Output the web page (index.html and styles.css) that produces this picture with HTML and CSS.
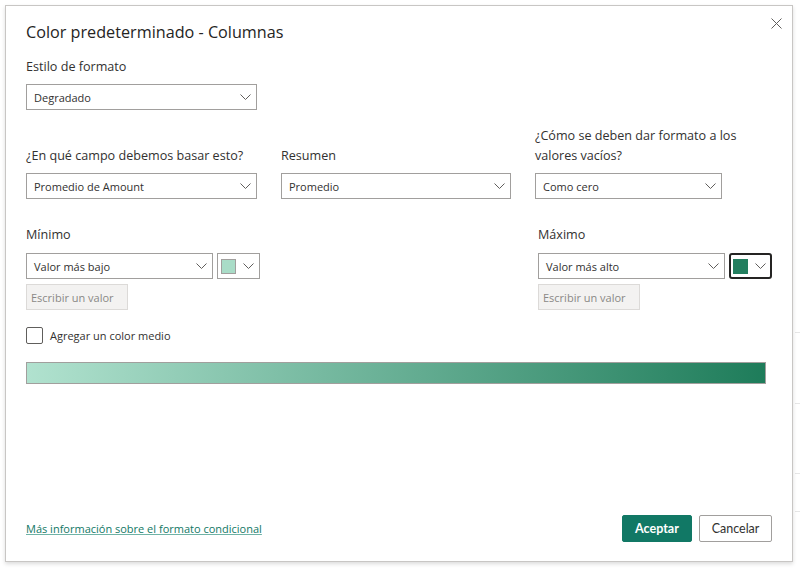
FILE: index.html
```html
<!DOCTYPE html>
<html lang="es">
<head>
<meta charset="utf-8">
<title>Color predeterminado - Columnas</title>
<link rel="stylesheet" href="styles.css">
</head>
<body>
<div class="backdrop">
  <span class="bg-line l1"></span>
  <span class="bg-line l2"></span>
  <span class="bg-line l3"></span>
  <span class="bg-line l4"></span>
</div>
<div class="dialog">
  <button class="close" aria-label="Cerrar">
    <svg width="11" height="11" viewBox="0 0 11 11"><path d="M0.5 0.5 L10.5 10.5 M10.5 0.5 L0.5 10.5" stroke="#605e5c" stroke-width="1" fill="none"/></svg>
  </button>
  <h1 class="title">Color predeterminado - Columnas</h1>

  <div class="field first">
    <div class="label">Estilo de formato</div>
    <div class="select w231"><span>Degradado</span><svg class="chev" width="11" height="6" viewBox="0 0 11 6"><path d="M0.5 0.5 L5.5 5.5 L10.5 0.5" stroke="#605e5c" fill="none"/></svg></div>
  </div>

  <div class="row3">
    <div class="field">
      <div class="label">¿En qué campo debemos basar esto?</div>
      <div class="select"><span>Promedio de Amount</span><svg class="chev" width="11" height="6" viewBox="0 0 11 6"><path d="M0.5 0.5 L5.5 5.5 L10.5 0.5" stroke="#605e5c" fill="none"/></svg></div>
    </div>
    <div class="field">
      <div class="label">Resumen</div>
      <div class="select"><span>Promedio</span><svg class="chev" width="11" height="6" viewBox="0 0 11 6"><path d="M0.5 0.5 L5.5 5.5 L10.5 0.5" stroke="#605e5c" fill="none"/></svg></div>
    </div>
    <div class="field">
      <div class="label">¿Cómo se deben dar formato a los valores vacíos?</div>
      <div class="select"><span>Como cero</span><svg class="chev" width="11" height="6" viewBox="0 0 11 6"><path d="M0.5 0.5 L5.5 5.5 L10.5 0.5" stroke="#605e5c" fill="none"/></svg></div>
    </div>
  </div>

  <div class="minmax">
    <div class="mm-col">
      <div class="label">Mínimo</div>
      <div class="mm-row">
        <div class="select w187"><span>Valor más bajo</span><svg class="chev" width="11" height="6" viewBox="0 0 11 6"><path d="M0.5 0.5 L5.5 5.5 L10.5 0.5" stroke="#605e5c" fill="none"/></svg></div>
        <div class="colorbtn"><span class="swatch light"></span><svg class="chev" width="11" height="6" viewBox="0 0 11 6"><path d="M0.5 0.5 L5.5 5.5 L10.5 0.5" stroke="#605e5c" fill="none"/></svg></div>
      </div>
      <div class="valinput">Escribir un valor</div>
    </div>
    <div class="mm-col">
      <div class="label">Máximo</div>
      <div class="mm-row">
        <div class="select w187"><span>Valor más alto</span><svg class="chev" width="11" height="6" viewBox="0 0 11 6"><path d="M0.5 0.5 L5.5 5.5 L10.5 0.5" stroke="#605e5c" fill="none"/></svg></div>
        <div class="colorbtn focused"><span class="swatch dark"></span><svg class="chev" width="11" height="6" viewBox="0 0 11 6"><path d="M0.5 0.5 L5.5 5.5 L10.5 0.5" stroke="#605e5c" fill="none"/></svg></div>
      </div>
      <div class="valinput">Escribir un valor</div>
    </div>
  </div>

  <label class="check"><span class="box"></span><span>Agregar un color medio</span></label>

  <div class="gradient"></div>

  <div class="footer">
    <a class="link" href="#">Más información sobre el formato condicional</a>
    <div class="buttons">
      <button class="btn primary">Aceptar</button>
      <button class="btn">Cancelar</button>
    </div>
  </div>
</div>
</body>
</html>
```

FILE: styles.css
```css
* { box-sizing: border-box; }
html, body { margin: 0; padding: 0; background: #ffffff; }
body {
  width: 800px;
  height: 569px;
  overflow: hidden;
  font-family: "Open Sans", "Noto Sans", sans-serif;
  color: #323130;
  position: relative;
}

.backdrop { position: absolute; inset: 0; }
.bg-line { position: absolute; left: 795px; width: 5px; height: 1px; background: #e6e6e6; }
.bg-line.l1 { top: 332px; }
.bg-line.l2 { top: 403px; }
.bg-line.l3 { top: 473px; }
.bg-line.l4 { top: 511px; }

.dialog {
  position: relative;
  margin: 5px 0 0 5px;
  width: 788px;
  height: 557px;
  background: #fff;
  border: 1px solid #c8c6c4;
  box-shadow: 0 2px 4px rgba(0,0,0,0.14);
  padding: 14px 20px 19px 20px;
  display: flex;
  flex-direction: column;
}

.close {
  position: absolute;
  top: 7px;
  right: 6px;
  width: 20px;
  height: 20px;
  border: 0;
  background: transparent;
  padding: 0;
  display: flex;
  align-items: center;
  justify-content: center;
}

.title {
  margin: 0;
  font-size: 16.2px;
  font-weight: 400;
  line-height: 24px;
  color: #252423;
}

.label {
  font-size: 12.6px;
  line-height: 20px;
  color: #323130;
}

.field { display: flex; flex-direction: column; gap: 7px; }
.field.first { margin-top: 13px; }

.select {
  height: 26px;
  border: 1px solid #a19f9d;
  background: #fff;
  display: flex;
  align-items: center;
  justify-content: space-between;
  padding: 0 5px 0 7px;
  font-size: 11px;
  color: #323130;
}
.select.w231 { width: 231px; }
.select.w187 { width: 187px; }
.chev { display: block; flex: none; }

.row3 {
  margin-top: 16px;
  display: grid;
  grid-template-columns: 231px 230px 187px;
  column-gap: 24px;
  align-items: end;
}
.row3 .field:nth-child(3) .label { width: 230px; }

.minmax {
  margin-top: 26px;
  display: flex;
  justify-content: space-between;
}
.mm-col { display: flex; flex-direction: column; }
.mm-col .label { margin-bottom: 8px; }
.mm-row { display: flex; gap: 4px; }

.colorbtn {
  width: 43px;
  height: 26px;
  border: 1px solid #a19f9d;
  display: flex;
  align-items: center;
  justify-content: space-between;
  padding: 0 5px 0 3px;
}
.colorbtn.focused {
  border: 2px solid #252423;
  border-radius: 3px;
  padding: 0 4px 0 2px;
}
.swatch { width: 15px; height: 15px; border: 1px solid #a19f9d; }
.swatch.light { background: #a9dcc7; }
.swatch.dark { background: #237f5f; border-color: #237f5f; }

.valinput {
  margin-top: 5px;
  width: 102px;
  height: 26px;
  background: #f3f2f1;
  border: 1px solid #dcdad8;
  font-size: 11px;
  color: #8a8886;
  display: flex;
  align-items: center;
  padding-left: 4px;
}

.check {
  margin-top: 17px;
  display: flex;
  align-items: center;
  gap: 7px;
  font-size: 11px;
  height: 17px;
}
.check .box {
  width: 17px;
  height: 17px;
  border: 1px solid #605e5c;
  border-radius: 2px;
  background: #fff;
}

.gradient {
  margin-top: 18px;
  width: 740px;
  height: 22px;
  border: 1px solid #a19f9d;
  background: linear-gradient(to right, #b1e2cf, #1e7c5a);
}

.footer {
  margin-top: auto;
  display: flex;
  align-items: center;
  justify-content: space-between;
}
.link {
  font-size: 11px;
  color: #117865;
  text-decoration: underline;
  text-decoration-color: #6fb3a6;
}
.buttons { display: flex; gap: 7px; }
.btn {
  height: 27px;
  padding: 0;
  font-family: "Lato", "Open Sans", sans-serif;
  font-size: 12.5px;
  border-radius: 2px;
  border: 1px solid #a19f9d;
  background: #fff;
  color: #323130;
  width: 73px;
}
.btn.primary {
  width: 70px;
  background: #117865;
  border-color: #117865;
  color: #fff;
  font-weight: 700;
}
```
